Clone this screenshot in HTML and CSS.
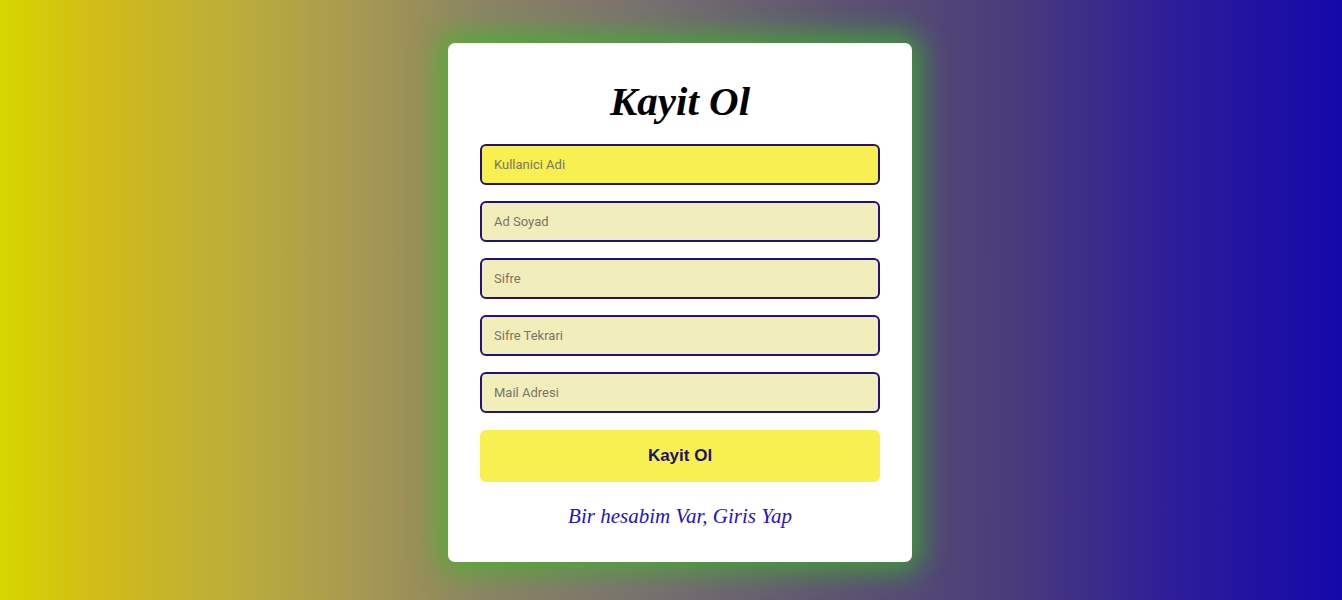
FILE: index.html
```html
<!DOCTYPE html>
<html lang="tr">
<head>
<meta charset="utf-8">
<title>Kayit Ol</title>
<link rel="stylesheet" href="styles.css">
</head>
<body>
<main class="page">
  <form class="card">
    <h1 class="title">Kayit Ol</h1>
    <input class="field field-active" type="text" placeholder="Kullanici Adi">
    <input class="field" type="text" placeholder="Ad Soyad">
    <input class="field" type="password" placeholder="Sifre">
    <input class="field" type="password" placeholder="Sifre Tekrari">
    <input class="field" type="email" placeholder="Mail Adresi">
    <button class="submit" type="button">Kayit Ol</button>
    <a class="login-link" href="#">Bir hesabim Var, Giris Yap</a>
  </form>
</main>
</body>
</html>
```
FILE: styles.css
```css
* { box-sizing: border-box; }
html, body { margin: 0; height: 100%; }
body {
  background: linear-gradient(to right,
    #d6d600 0%, #d2bc18 7%, #bcae38 17%, #a89a50 26%, #8c8464 36%,
    #7a7070 48%, #5e5472 62%, #4a3c7a 75%, #2e1e98 87%, #1408aa 100%);
  font-family: Roboto, "Liberation Sans", Arial, sans-serif;
}
.page {
  height: 600px;
  display: flex;
  justify-content: center;
  align-items: flex-start;
  padding-top: 43px;
  padding-left: 18px;
}
.card {
  width: 464px;
  height: 519px;
  background: #ffffff;
  border-radius: 7px;
  box-shadow: 0 0 28px 10px rgba(60, 185, 40, 0.7);
  padding: 30px 32px 0;
  display: flex;
  flex-direction: column;
  align-items: stretch;
}
.title {
  margin: 0 0 15px;
  text-align: center;
  font-family: "Liberation Serif", "Times New Roman", serif;
  font-style: italic;
  font-weight: bold;
  font-size: 41px;
  line-height: 56px;
  color: #000;
}
.field {
  height: 41px;
  margin-bottom: 16px;
  border: 2px solid #24107e;
  border-radius: 6px;
  background: #f2eebc;
  padding: 0 12px;
  font-family: Roboto, "Liberation Sans", Arial, sans-serif;
  font-size: 13px;
  color: #333;
  outline: none;
}
.field::placeholder { color: #7a7468; }
.field-active { background: #f8ef50; }
.submit {
  height: 52px;
  margin-top: 1px;
  border: none;
  border-radius: 6px;
  background: #f8f050;
  color: #1e1262;
  font-family: "Liberation Sans", Arial, sans-serif;
  font-weight: bold;
  font-size: 17px;
}
.login-link {
  margin-top: 22px;
  text-align: center;
  font-family: "Liberation Serif", "Times New Roman", serif;
  font-style: italic;
  font-size: 21px;
  color: #1e10d6;
  text-decoration: none;
}
```
